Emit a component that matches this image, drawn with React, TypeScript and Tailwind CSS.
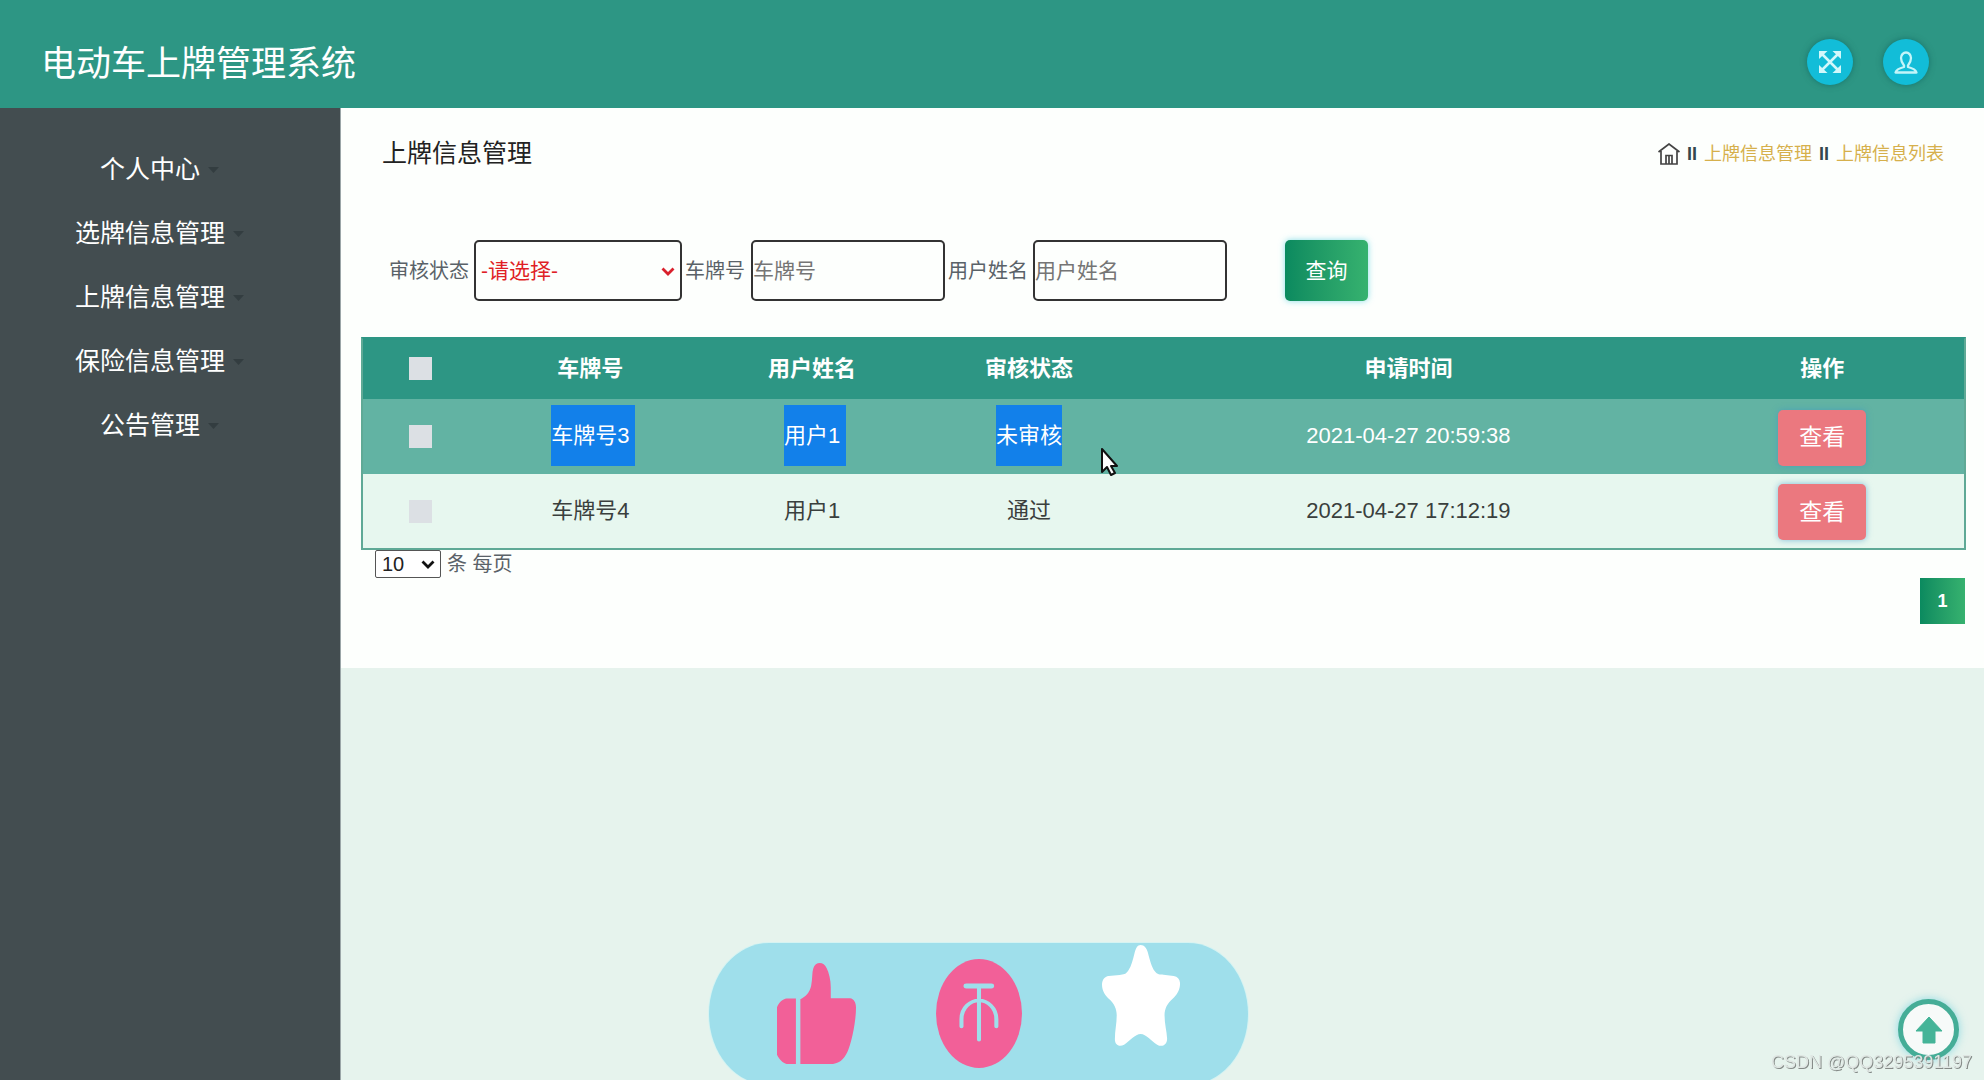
import type { ReactNode } from "react";

const menu = ["个人中心", "选牌信息管理", "上牌信息管理", "保险信息管理", "公告管理"];

const rows = [
  { plate: "车牌号3", user: "用户1", status: "未审核", time: "2021-04-27 20:59:38", active: true },
  { plate: "车牌号4", user: "用户1", status: "通过", time: "2021-04-27 17:12:19", active: false },
];

function Chevron({ className }: { className: string }) {
  return (
    <svg viewBox="0 0 14 9" className={className} fill="none" stroke="currentColor" strokeWidth="2.8" aria-hidden="true">
      <path d="M1.5 1.5 7 7l5.5-5.5" />
    </svg>
  );
}

function Marked({ on, newline, children }: { on: boolean; newline?: boolean; children: ReactNode }) {
  if (!on) return <>{children}</>;
  return (
    <span className={newline ? "-mr-1.5 inline-block bg-[#1280ea] pr-1.5 leading-[61px]" : "inline-block bg-[#1280ea] leading-[61px]"}>
      {children}
    </span>
  );
}

function Pointer() {
  return (
    <svg viewBox="0 0 17 28" className="pointer-events-none absolute top-[49px] left-[calc(50%+72px)] h-7 w-[17px]" aria-hidden="true">
      <path d="M1 1v23l5-5 4 8 4-2-4-7h6z" fill="#fff" stroke="#111" strokeWidth="2" strokeLinejoin="round" />
    </svg>
  );
}

function Tick({ label }: { label: string }) {
  return <input type="checkbox" aria-label={label} className="mx-auto block size-[23px] appearance-none bg-[#dce0e4]" />;
}

export default function App() {
  return (
    <div className="flex min-h-screen flex-col bg-[#e6f3ed] font-['Liberation_Sans','Noto_Sans_CJK_SC',sans-serif] text-[#333]">
      <header className="flex h-[108px] items-center justify-between bg-[#2d9684] pt-4 pr-[55px] pl-[41px]">
        <h1 className="pt-0.5 text-[35px] leading-none text-white">电动车上牌管理系统</h1>
        <div className="flex gap-[30px]">
          <button type="button" aria-label="全屏" className="flex size-[46px] items-center justify-center rounded-full bg-[#12bdd8] text-[#d2f8fb] shadow-[0_0_6px_rgba(0,80,80,0.5)]">
            <svg viewBox="0 0 22 22" className="size-[22px]" fill="currentColor" aria-hidden="true">
              <path d="M0 0h8.500L0 8zM22 0v8l-8.500-8zM0 22v-8l8.500 8zM22 22h-8.500l8.500-8z" />
              <path d="m3 3 16 16M19 3 3 19" stroke="currentColor" strokeWidth="2.500" />
            </svg>
          </button>
          <button type="button" aria-label="用户" className="flex size-[46px] items-center justify-center rounded-full bg-[#12bdd8] text-[#c4f5f9] shadow-[0_0_6px_rgba(0,80,80,0.5)]">
            <svg viewBox="0 0 24 23" className="h-[23px] w-6" fill="none" stroke="currentColor" strokeWidth="2.300" aria-hidden="true">
              <path d="M10 14.500C8 12 7 9.500 7 7a5 5.500 0 0 1 10 0c0 2.500-1 5-3 7.500v1.500c4 1 7.500 2 8.500 5.500h-21c1-3.500 4.500-4.500 8.500-5.500z" strokeLinejoin="round" />
            </svg>
          </button>
        </div>
      </header>

      <div className="flex flex-1">
        <nav className="w-[341px] shrink-0 border-r border-[#9ba6a8] bg-[#434d50] pt-[30px]">
          <ul className="w-[319px]">
            {menu.map((item) => (
              <li key={item}>
                <a href="#" className="flex h-16 items-center justify-center gap-2 text-[25px] text-white">
                  {item}
                  <svg viewBox="0 0 11 6" className="h-1.5 w-[11px]" fill="#333d40" aria-hidden="true">
                    <path d="M0 0h11L5.500 6z" />
                  </svg>
                </a>
              </li>
            ))}
          </ul>
        </nav>

        <main className="min-w-0 flex-1">
          <div className="h-[560px] bg-[#fdfffd] pr-[18px] pl-5">
            <div className="flex h-[92px] items-center justify-between pr-[22px] pl-[21px]">
              <h2 className="text-[25px] text-[#222]">上牌信息管理</h2>
              <nav aria-label="位置" className="flex items-center gap-[7px] text-lg text-[#333]">
                <a href="#" aria-label="首页">
                  <svg viewBox="0 0 22 22" className="size-[22px]" fill="none" stroke="#444" strokeWidth="1.700" aria-hidden="true">
                    <path d="M.5 9 11 1l10.500 8M3 8v13h16V8M8 21v-8.500h6V21M11 12.500V21" />
                  </svg>
                </a>
                <span className="font-bold text-[#34474f]">II</span>
                <a href="#" className="text-[#d6b04c]">上牌信息管理</a>
                <span className="font-bold text-[#34474f]">II</span>
                <a href="#" className="text-[#d6b04c]">上牌信息列表</a>
              </nav>
            </div>

            <form className="mt-10 flex items-center pl-7 text-xl text-[#5a6268]" onSubmit={(e) => e.preventDefault()}>
              <label htmlFor="state">审核状态</label>
              <div className="relative ml-[5px]">
                <select id="state" className="block h-[61px] w-[208px] appearance-none rounded-[5px] border-2 border-[#333] bg-transparent pl-[5px] text-[21px] text-[#e01f26]">
                  <option>-请选择-</option>
                </select>
                <Chevron className="pointer-events-none absolute top-[27px] right-[7px] h-[9px] w-3.5 text-[#d9202c]" />
              </div>
              <label htmlFor="plate" className="ml-[3px]">车牌号</label>
              <input id="plate" placeholder="车牌号" className="ml-1.5 h-[61px] w-[194px] rounded-[5px] border-2 border-[#333] text-[21px] placeholder:text-[#757575]" />
              <label htmlFor="user" className="ml-[3px]">用户姓名</label>
              <input id="user" placeholder="用户姓名" className="ml-[5px] h-[61px] w-[194px] rounded-[5px] border-2 border-[#333] text-[21px] placeholder:text-[#757575]" />
              <button type="submit" className="ml-[58px] h-[61px] w-[83px] rounded-[5px] bg-linear-to-r from-[#0a8a5f] to-[#36b26f] text-[21px] text-white shadow-[0_0_6px_rgba(60,200,220,0.6)]">
                查询
              </button>
            </form>

            <table className="mt-9 w-full table-fixed border-separate border-spacing-0 border-2 border-[#5fa996] border-t-[#2d9684] text-center text-[22px]">
              <colgroup>
                <col className="w-[7.2%]" />
                <col className="w-[14%]" />
                <col className="w-[13.7%]" />
                <col className="w-[13.4%]" />
                <col className="w-[34%]" />
                <col />
              </colgroup>
              <thead>
                <tr className="h-[60px] bg-[#2d9684] text-white *:pb-0.5">
                  <th><Tick label="全选" /></th>
                  <th>车牌号</th>
                  <th>用户姓名</th>
                  <th>审核状态</th>
                  <th>申请时间</th>
                  <th>操作</th>
                </tr>
              </thead>
              <tbody>
                {rows.map((r) => (
                  <tr key={r.plate} className={r.active ? "h-[75px] bg-[#62b3a3] text-white" : "h-[74px] bg-[#e7f7ef] text-[#3a3f3d]"}>
                    <td><Tick label={r.plate} /></td>
                    <td className="pb-0.5"><Marked on={r.active} newline>{r.plate}</Marked></td>
                    <td className="pb-0.5"><Marked on={r.active} newline>{r.user}</Marked></td>
                    <td className="relative pb-0.5">
                      <Marked on={r.active}>{r.status}</Marked>
                      {r.active && <Pointer />}
                    </td>
                    <td className="pb-0.5">{r.time}</td>
                    <td className="pt-0.5">
                      <button type="button" className="h-14 w-[88px] rounded-[5px] bg-[#eb787f] align-middle text-[23px] text-white shadow-[0_0_6px_rgba(60,150,200,0.6)]">
                        查看
                      </button>
                    </td>
                  </tr>
                ))}
              </tbody>
            </table>

            <div className="flex items-center gap-1.5 pl-3.5 text-xl text-[#5a6268]">
              <div className="relative">
                <select id="size" className="block h-7 w-[66px] appearance-none rounded-[2px] border border-[#555] bg-white pl-1.5 text-xl leading-none text-[#222]">
                  <option>10</option>
                </select>
                <Chevron className="pointer-events-none absolute top-2.5 right-1.5 h-[9px] w-3.5 text-[#111]" />
              </div>
              <label htmlFor="size" className="leading-7">条 每页</label>
            </div>
            <div className="flex justify-end pr-px">
              <button type="button" className="h-[46px] w-[45px] bg-linear-to-r from-[#0a8a5f] to-[#36b26f] text-lg font-bold text-white">1</button>
            </div>
          </div>
        </main>
      </div>

      <div className="fixed -bottom-[5px] left-[calc(50%-283px)] flex h-[142px] items-start gap-20 rounded-[60px/71px] bg-[#9fdfeb] px-[68px] shadow-[0_0_0_1px_#d5f3f2]">
        <button type="button" aria-label="点赞" className="mt-5">
          <svg viewBox="236 129 213 304" preserveAspectRatio="none" className="h-[101px] w-[79px]" fill="#f26098" aria-hidden="true">
            <path d="M287 236v197h-25c-10-3-20-14-26-28V262c5-14 15-24 26-26zM299 433V238c14-8 25-20 29-40 4-22 2-40 6-53 5-20 28-22 36 0 6 14 11 34 11 58v32h52c10 2 16 12 16 28 0 40-10 95-20 125-8 24-20 42-42 45z" />
          </svg>
        </button>
        <button type="button" aria-label="投币" className="mt-4">
          <svg viewBox="665 118 233 328" preserveAspectRatio="none" className="h-[109px] w-[86px]" fill="none" stroke="#9fdfeb" strokeLinecap="round" aria-hidden="true">
            <ellipse cx="781.5" cy="282" rx="116.500" ry="164" fill="#f26098" stroke="none" />
            <path d="M747 199h68" strokeWidth="15" />
            <path d="M781.5 199v162M734 321v-22c0-34 24-56 47.500-56s47 22 47 56v22" strokeWidth="11" />
          </svg>
        </button>
        <button type="button" aria-label="收藏" className="mt-0.5">
          <svg viewBox="1114 76 212 303" preserveAspectRatio="none" className="h-[101px] w-[78px]" fill="#fff" aria-hidden="true">
            <path d="M1219 76c10 0 17 10 20 24 5 22 10 42 18 54 8 12 14 10 24 11l28 4c12 2 18 12 17 26-1 18-10 32-20 42-14 14-22 28-22 50 0 26 6 48 7 70 0 18-14 27-27 18-16-11-30-32-45-32s-30 21-45 32c-12 8-25 2-25-16 0-26 5-46 5-72 0-20-8-36-20-48-10-10-20-25-20-44 0-14 7-24 18-26l30-3c10-1 18-2 24-14 8-14 12-32 16-50 4-16 8-26 17-26z" />
          </svg>
        </button>
      </div>

      <button type="button" aria-label="返回顶部" className="fixed right-[25px] bottom-5 flex size-[61px] items-center justify-center rounded-full border-[5px] border-[#45ad97] bg-[#f7faf9] shadow-[0_0_8px_rgba(80,200,220,0.6)]">
        <svg viewBox="0 0 28 28" className="size-7" fill="#45b498" stroke="#45b498" strokeLinejoin="round" aria-hidden="true">
          <path d="M14 1 27 15h-7v12H8V15H1z" />
        </svg>
      </button>
      <p className="pointer-events-none fixed right-3 bottom-1.5 text-lg leading-6 text-[#dfe6e3] [text-shadow:1px_1px_0_#858b88]">CSDN @QQ3295391197</p>
    </div>
  );
}
